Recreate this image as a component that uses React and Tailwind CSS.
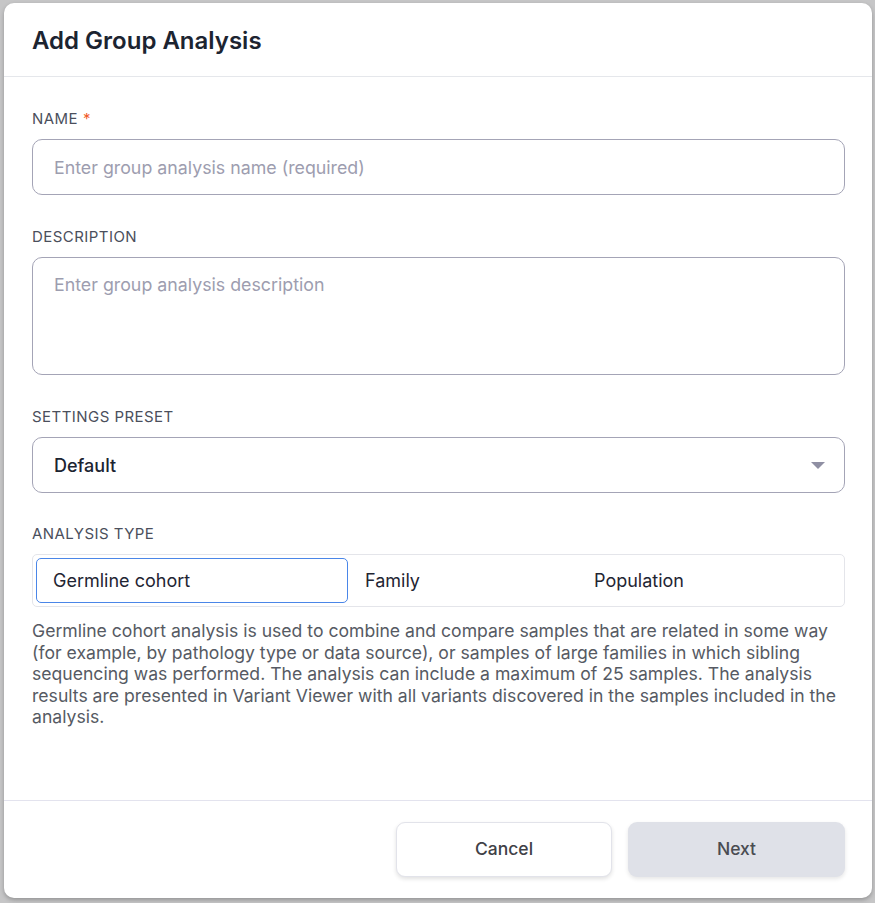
import { useState } from 'react'

const TYPES = [
  { id: 'germline', label: 'Germline cohort', width: 'w-[312px]' },
  { id: 'family', label: 'Family', width: 'w-[229px]' },
  { id: 'population', label: 'Population', width: 'flex-1' },
]

function Label({ children, required }) {
  return (
    <p className="text-[15px] leading-5 tracking-[0.03em] uppercase text-[#4b4f5c] mb-[10px]">
      {children}
      {required && <span className="text-[#f05a28] ml-[5px]">*</span>}
    </p>
  )
}

export default function App() {
  const [type, setType] = useState('germline')

  return (
    <div className="min-h-screen bg-[#c6c6c7] pt-[3px] pb-[5px] pl-[4px] pr-[3px]" style={{ fontFamily: 'Inter, "Noto Sans", sans-serif' }}>
      <div className="bg-white rounded-[10px] shadow-[0_2px_4px_rgba(0,0,0,0.25)] flex flex-col h-[895px]">

        {/* Header */}
        <div className="h-[74px] px-[28px] flex items-center border-b border-[#e5e7eb]">
          <h1 className="text-[24px] font-semibold text-[#1c2431] leading-none mt-[2px]">Add Group Analysis</h1>
        </div>

        {/* Body */}
        <div className="flex-1 px-[28px] pr-[27px] pt-[32px]">
          <Label required>Name</Label>
          <input
            className="w-full h-[56px] rounded-[10px] border border-[#a4a4b6] px-[21px] text-[17.8px] text-[#1c2431] placeholder:text-[#9d9daf] outline-none"
            placeholder="Enter group analysis name (required)"
          />

          <div className="mt-[32px]">
            <Label>Description</Label>
            <textarea
              className="block w-full h-[118px] rounded-[10px] border border-[#a4a4b6] px-[21px] py-[16px] text-[17.8px] leading-[22px] text-[#1c2431] placeholder:text-[#9d9daf] outline-none resize-none"
              placeholder="Enter group analysis description"
            />
          </div>

          <div className="mt-[32px]">
            <Label>Settings Preset</Label>
            <div className="h-[56px] rounded-[10px] border border-[#a4a4b6] px-[21px] flex items-center justify-between">
              <span className="text-[18px] font-medium text-[#1c2431]">Default</span>
              <svg width="14" height="7" viewBox="0 0 14 7" className="mr-[-2px]">
                <path d="M0 0 L14 0 L7 7 Z" fill="#8f8fa3" />
              </svg>
            </div>
          </div>

          <div className="mt-[31px]">
            <Label>Analysis Type</Label>
            <div className="h-[53px] rounded-[5px] border border-[#e4e5ea] p-[3px] flex">
              {TYPES.map(t => (
                <button
                  key={t.id}
                  onClick={() => setType(t.id)}
                  className={`${t.width} h-full rounded-[5px] text-left pl-[16px] pr-[16px] text-[18px] text-[#1f2533] ${type === t.id ? 'border border-[#4a86e8]' : 'border border-transparent'}`}
                >
                  {t.label}
                </button>
              ))}
            </div>
          </div>

          <p className="mt-[13px] text-[17.6px] leading-[21.5px] text-[#565a63]">
            Germline cohort analysis is used to combine and compare samples that are related in some way (for example, by pathology type or data source), or samples of large families in which sibling sequencing was performed. The analysis can include a maximum of 25 samples. The analysis results are presented in Variant Viewer with all variants discovered in the samples included in the analysis.
          </p>
        </div>

        {/* Footer */}
        <div className="h-[98px] border-t border-[#e3e3ee] flex items-center justify-end gap-[16px] pr-[27px] pb-[1px]">
          <button className="w-[216px] h-[55px] rounded-[9px] bg-white border border-[#e2e3ea] shadow-[0_2px_4px_rgba(0,0,0,0.12)] text-[17.5px] font-medium text-[#3f4147]">
            Cancel
          </button>
          <button className="w-[217px] h-[55px] rounded-[9px] bg-[#dfe1e8] shadow-[0_2px_4px_rgba(0,0,0,0.10)] text-[17.5px] font-medium text-[#4a4c52]">
            Next
          </button>
        </div>
      </div>
    </div>
  )
}
